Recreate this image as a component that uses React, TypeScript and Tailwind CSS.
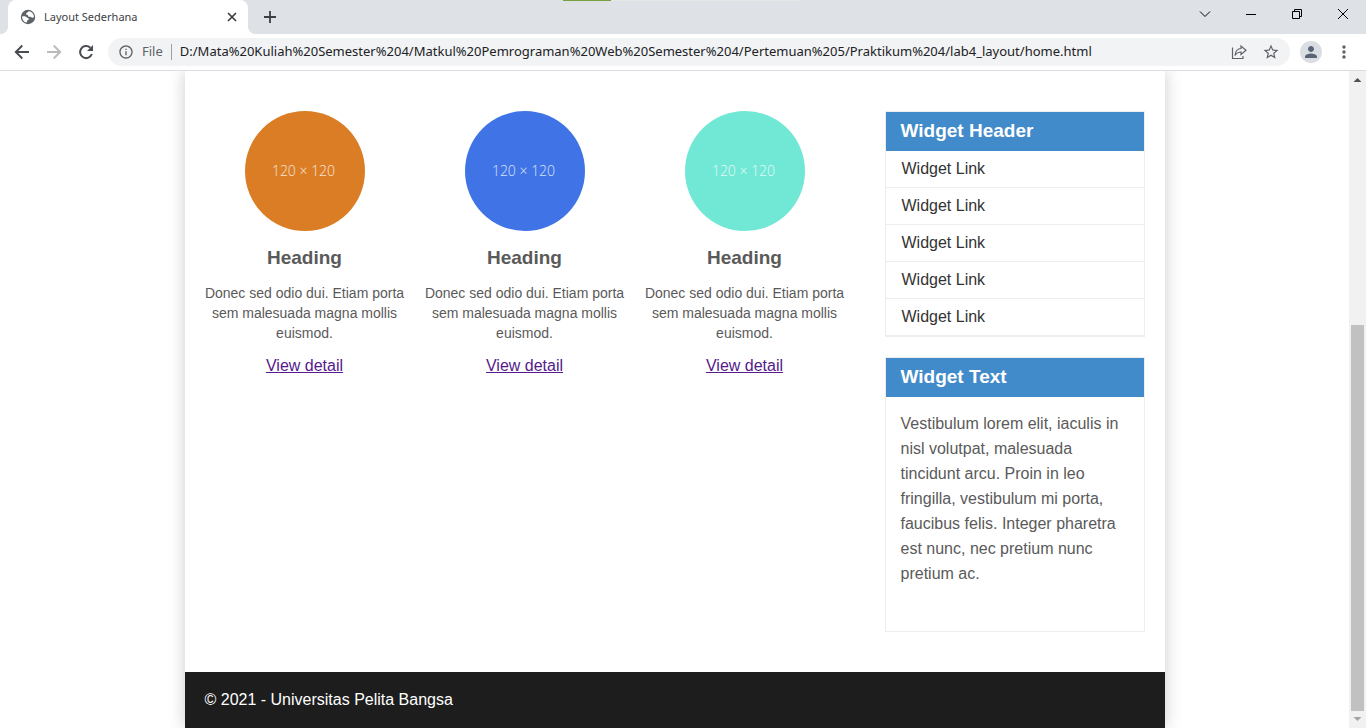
import React from "react";
import { MdInfoOutline, MdStarBorder, MdPerson, MdMoreVert } from "react-icons/md";

const columns = [
  { id: 1, colour: "bg-[#da7d25]" },
  { id: 2, colour: "bg-[#3f73e6]" },
  { id: 3, colour: "bg-[#71e7d5]" },
];

const links = [1, 2, 3, 4, 5];

function Globe() {
  return (
    <svg width="16" height="16" viewBox="0 0 16 16" className="shrink-0">
      <circle cx="8" cy="8" r="7.2" fill="#5f6368" />
      <path
        fill="#fff"
        d="M9.300 2.300c-1.600.3-1.500 1.300-2.600 1.700-1 .4-.8 1.500.2 1.700 1 .1 1.200.5 1.300 1.300.2 1 1.300.8 2.200.8 1 0 1.100 1 1.900 1 .8.100 1.400-.3 1.700-1C13.900 5.200 12 2.900 9.300 2.300zM2.100 7.400c1.300-.2 2.900-.1 3.900.4.900.5 1.200 1.300 2.200 1.400.9.200.9 1.200.1 1.600-.8.400-1.100.8-1.200 1.500-.1.800-.6 1.300-.6 1.300C3.800 13 2 10.400 2.100 7.400z"
      />
    </svg>
  );
}

function TabStrip() {
  return (
    <header className="relative flex h-[34px] shrink-0 items-stretch bg-[#dee1e6] pl-2">
      <div className="absolute top-0 left-[41.2%] flex h-px w-[240px] bg-[#e6e6e6]">
        <span className="w-12 bg-[#76a03e]" />
      </div>
      <div className="relative flex w-60 items-center rounded-t-lg bg-white pr-2 pl-3 text-[#3c4043]">
        <span className="absolute bottom-0 -left-2 size-2 bg-[radial-gradient(circle_at_0_0,#dee1e6_8px,#fff_8px)]" />
        <span className="absolute -right-2 bottom-0 size-2 bg-[radial-gradient(circle_at_100%_0,#dee1e6_8px,#fff_8px)]" />
        <Globe />
        <span className="ml-2 flex-1 text-[11px]">Layout Sederhana</span>
        <button type="button" aria-label="Close tab" className="flex size-4 items-center justify-center">
          <svg width="10" height="10" viewBox="0 0 10 10" fill="none" stroke="currentColor" strokeWidth="1.7"><path d="m1 1 8 8M9 1 1 9" /></svg>
        </button>
      </div>
      <button type="button" aria-label="New tab" className="ml-3 flex w-5 items-center justify-center text-[#3c4043]">
        <svg width="12" height="12" viewBox="0 0 12 12" fill="none" stroke="currentColor" strokeWidth="1.8"><path d="M6 0v12M0 6h12" /></svg>
      </button>
      <div className="ml-auto flex items-center pb-1.5 text-black">
        <button type="button" aria-label="Search tabs" className="flex w-[46px] justify-center">
          <svg width="12" height="12" viewBox="0 0 12 12" fill="none" stroke="currentColor"><path d="M1 3.500 6 8.500l5-5" /></svg>
        </button>
        <button type="button" aria-label="Minimise" className="flex w-[46px] justify-center">
          <svg width="10" height="10" viewBox="0 0 10 10" fill="none" stroke="currentColor"><path d="M0 5.500h10" /></svg>
        </button>
        <button type="button" aria-label="Restore" className="flex w-[46px] justify-center">
          <svg width="10" height="10" viewBox="0 0 10 10" fill="none" stroke="currentColor"><path d="M.5 2.500h7v7h-7zM2.500 2.500V.5h7v7h-2" /></svg>
        </button>
        <button type="button" aria-label="Close" className="flex w-[46px] justify-center">
          <svg width="10" height="10" viewBox="0 0 10 10" fill="none" stroke="currentColor"><path d="m0 0 10 10M10 0 0 10" /></svg>
        </button>
      </div>
    </header>
  );
}

function Toolbar() {
  return (
    <div className="flex h-[37px] shrink-0 items-center border-b border-[#dadce0] bg-white px-3 text-[#5f6368]">
      <button type="button" aria-label="Back" className="mr-3 text-[#494c50]">
        <svg width="20" height="20" viewBox="0 0 20 20" fill="none" stroke="currentColor" strokeWidth="1.9"><path d="M17 10H4M10.300 3.500 3.800 10l6.500 6.500" /></svg>
      </button>
      <button type="button" aria-label="Forward" className="mr-3 text-[#b9bbbd]">
        <svg width="20" height="20" viewBox="0 0 20 20" fill="none" stroke="currentColor" strokeWidth="1.9"><path d="M3 10h13M9.700 3.500l6.500 6.500-6.500 6.500" /></svg>
      </button>
      <button type="button" aria-label="Reload" className="mr-3 text-[#494c50]">
        <svg width="20" height="20" viewBox="0 0 20 20" fill="none" stroke="currentColor" strokeWidth="2">
          <path d="M15.800 12A6 6 0 1 1 14.300 5.800" />
          <path d="M17 3v6h-6z" fill="currentColor" stroke="none" />
        </svg>
      </button>
      <div className="flex h-7 min-w-0 flex-1 items-center rounded-full bg-[#f1f3f4] px-2.5">
        <MdInfoOutline className="size-4 shrink-0" />
        <span className="ml-2 text-[13px]">File</span>
        <span className="mx-2 h-4 w-px bg-[#9aa0a6]" />
        <input
          aria-label="Address"
          className="min-w-0 flex-1 bg-transparent text-[13px] text-[#202124] outline-none"
          defaultValue="D:/Mata%20Kuliah%20Semester%204/Matkul%20Pemrograman%20Web%20Semester%204/Pertemuan%205/Praktikum%204/lab4_layout/home.html"
        />
        <button type="button" aria-label="Share" className="mr-[15px]">
          <svg width="16" height="16" viewBox="0 0 16 16" fill="none" stroke="currentColor" strokeWidth="1.2">
            <path d="M1.500 3.500v11h10.500v-2.500M10 2v2.500C6.500 4.500 4.500 7 4 11.500 5.500 9 7.500 8 10 8v2.500l5-4.300z" />
          </svg>
        </button>
        <button type="button" aria-label="Bookmark"><MdStarBorder className="size-[18px]" /></button>
      </div>
      <button type="button" aria-label="Profile" className="ml-2.5 flex size-[22px] items-center justify-center rounded-full bg-[#dadde2] text-[#5a6478]">
        <MdPerson className="size-[18px]" />
      </button>
      <button type="button" aria-label="Menu" className="ml-3"><MdMoreVert className="size-5" /></button>
    </div>
  );
}

function Column({ colour }: { colour: string }) {
  return (
    <article className="w-[200px] text-center">
      <div className={`mx-auto flex size-[120px] items-center justify-center rounded-full pr-0.5 font-['Open_Sans',sans-serif] text-sm font-light text-white/80 ${colour}`}>
        120 × 120
      </div>
      <h3 className="mt-[15px] text-[19px] leading-6 font-bold">Heading</h3>
      <p className="mt-[13px] text-sm leading-5">Donec sed odio dui. Etiam porta sem malesuada magna mollis euismod.</p>
      <a href="#detail" className="mt-[11px] inline-block leading-6 text-[#551a8b] underline">View detail</a>
    </article>
  );
}

function WidgetTitle({ children }: { children: string }) {
  return <h3 className="bg-[#428bca] px-[15px] pt-[7px] pb-2 text-[19px] leading-6 font-bold text-white">{children}</h3>;
}

function Page() {
  return (
    <div className="min-w-0 flex-1 overflow-hidden bg-white font-['Liberation_Sans',Arial,sans-serif] text-base text-[#5a5a5a]">
      <div className="mx-auto max-w-[980px] bg-white shadow-[0_0_16px_#ccc]">
        <div className="flex items-start justify-between gap-5 px-5 py-10">
          <main className="flex flex-wrap gap-5">
            {columns.map((c) => <Column key={c.id} colour={c.colour} />)}
          </main>
          <aside className="flex w-[260px] shrink-0 flex-col gap-5">
            <section className="border border-[#eee]">
              <WidgetTitle>Widget Header</WidgetTitle>
              <ul>
                {links.map((n) => (
                  <li key={n} className="border-b border-[#eee]">
                    <a href="#widget" className="block px-4 py-1.5 leading-6 text-[#333]">Widget Link</a>
                  </li>
                ))}
              </ul>
            </section>
            <section className="border border-[#eee]">
              <WidgetTitle>Widget Text</WidgetTitle>
              <p className="px-[15px] pt-3.5 pb-[45px] leading-[25px]">
                Vestibulum lorem elit, iaculis in nisl volutpat, malesuada tincidunt arcu. Proin in leo fringilla, vestibulum mi porta, faucibus felis. Integer pharetra est nunc, nec pretium nunc pretium ac.
              </p>
            </section>
          </aside>
        </div>
        <footer className="bg-[#1d1d1d] px-5 py-4 leading-6 text-white">© 2021 - Universitas Pelita Bangsa</footer>
      </div>
    </div>
  );
}

function ScrollBar() {
  return (
    <div className="flex w-[17px] shrink-0 flex-col items-center bg-[#f1f1f1]">
      <svg width="17" height="17" viewBox="0 0 17 17" fill="#505050"><path d="m8.500 7 4 4h-8z" /></svg>
      <div className="flex w-[13px] flex-1 flex-col justify-end">
        <div className="h-[62%] bg-[#c1c1c1]" />
      </div>
      <svg width="17" height="17" viewBox="0 0 17 17" fill="#a3a3a3"><path d="m8.500 10 4-4h-8z" /></svg>
    </div>
  );
}

export default function App() {
  return (
    <div className="flex h-screen flex-col overflow-hidden bg-white font-['Noto_Sans',sans-serif]">
      <TabStrip />
      <Toolbar />
      <div className="flex min-h-0 flex-1">
        <Page />
        <ScrollBar />
      </div>
    </div>
  );
}
